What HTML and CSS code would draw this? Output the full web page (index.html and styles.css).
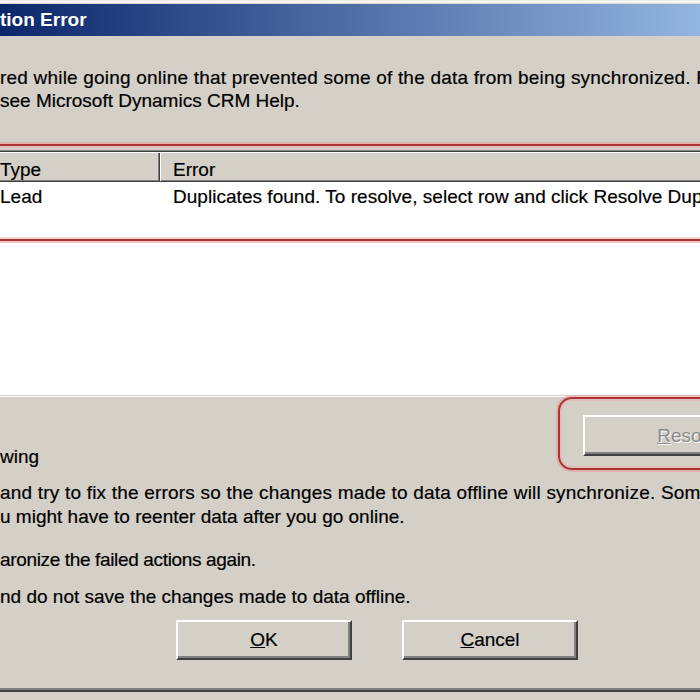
FILE: index.html
```html
<!DOCTYPE html>
<html lang="en">
<head>
<meta charset="utf-8">
<title>Synchronization Error</title>
<link rel="stylesheet" href="styles.css">
</head>
<body>
<div class="window">
  <div class="titlebar"><span class="title">tion Error</span></div>
  <div class="content">
    <p class="intro"><span class="wide">red while going online that prevented some of the data from being synchronized. For more information,</span><br>see Microsoft Dynamics CRM Help.</p>
    <div class="listwrap">
      <div class="mark mark-list"></div>
      <div class="list">
        <div class="list-head">
          <div class="hcell col1">Type</div>
          <div class="hcell col2">Error</div>
        </div>
        <div class="list-row">
          <div class="cell col1">Lead</div>
          <div class="cell col2">Duplicates found. To resolve, select row and click Resolve Duplicates.</div>
        </div>
      </div>
    </div>
    <div class="action-row">
      <div class="label">wing</div>
      <div class="resolve-wrap">
        <div class="mark mark-btn"></div>
        <button class="btn btn-resolve" disabled><u>R</u>esolve Duplicates</button>
      </div>
    </div>
    <p class="opt opt1"><span class="wide">and try to fix the errors so the changes made to data offline will synchronize. Some</span><br>u might have to reenter data after you go online.</p>
    <p class="opt opt2">aronize the failed actions again.</p>
    <p class="opt opt3">nd do not save the changes made to data offline.</p>
    <div class="buttons">
      <button class="btn btn-main"><u>O</u>K</button>
      <button class="btn btn-main"><u>C</u>ancel</button>
    </div>
  </div>
</div>
</body>
</html>
```

FILE: styles.css
```css
html, body {
  margin: 0;
  padding: 0;
}
body {
  width: 700px;
  height: 700px;
  overflow: hidden;
  background: #d4d0c8;
  font-family: "Liberation Sans", Arial, sans-serif;
  font-size: 19px;
  color: #000;
}
.window {
  width: 820px;
  margin-left: -10px;
  padding-top: 4px;
  background: linear-gradient(to bottom, #e6e4de 0, #ffffff 2px, #d4d0c8 4px) top / 100% 4px no-repeat, #d4d0c8;
  border-bottom: 2px solid #808080;
  box-shadow: 0 2px 0 #404040;
}
.titlebar {
  height: 32px;
  line-height: 32px;
  padding-left: 10px;
  background: linear-gradient(to right, #0a246a 0, #a6caf0 810px);
  color: #fff;
  font-weight: bold;
  font-size: 19px;
  white-space: nowrap;
}
.content {
  padding: 30px 0 28px 10px;
  -webkit-text-stroke: 0.2px #000;
}
.wide {
  letter-spacing: 0.2px;
}
.intro {
  margin: 0 0 38px;
  line-height: 23px;
  white-space: nowrap;
}
.listwrap {
  position: relative;
  margin-left: -8px;
}
.list {
  box-sizing: border-box;
  height: 247px;
  background: #fff;
  border: 1px solid;
  border-color: #808080 #ffffff #ffffff #808080;
  padding: 1px;
  box-shadow: inset 1px 1px #404040, inset -1px -1px #d4d0c8;
  white-space: nowrap;
  overflow: hidden;
}
.list-head {
  display: flex;
  background: #d4d0c8;
  border-top: 1px solid #fff;
  border-bottom: 1px solid #404040;
  box-shadow: inset 0 -1px #808080;
}
.hcell {
  box-sizing: border-box;
  height: 28px;
  padding-top: 7px;
  line-height: 20px;
}
.list-head .col1 {
  width: 166px;
  padding-left: 6px;
  border-right: 1px solid #404040;
  box-shadow: inset -1px 0 #808080;
}
.list-head .col2 {
  flex: 1;
  padding-left: 12px;
  border-left: 1px solid #fff;
}
.list-row {
  display: flex;
  padding-top: 3px;
  line-height: 23px;
}
.list-row .col1 {
  width: 166px;
  box-sizing: border-box;
  padding-left: 6px;
}
.list-row .col2 {
  padding-left: 13px;
  letter-spacing: 0.03px;
}
.mark {
  position: absolute;
  box-sizing: border-box;
  border: 2px solid #a83434;
  box-shadow: 0 0 0 2px rgba(236, 150, 150, 0.55), inset 0 0 0 2px rgba(240, 170, 170, 0.5);
  pointer-events: none;
  z-index: 2;
}
.mark-list {
  left: -30px;
  right: -30px;
  top: -6px;
  height: 97px;
  border-radius: 12px;
}
.action-row {
  display: grid;
  grid-template-columns: 583px 320px;
  align-items: start;
}
.label {
  margin-top: 48px;
  line-height: 23px;
}
.resolve-wrap {
  position: relative;
  margin-top: 18px;
}
.mark-btn {
  left: -25px;
  top: -18px;
  width: 360px;
  height: 73px;
  border-radius: 14px;
}
.btn {
  box-sizing: border-box;
  height: 41px;
  padding: 0;
  background: #d4d0c8;
  border: 2px solid;
  border-color: #ffffff #404040 #404040 #ffffff;
  box-shadow: inset -2px -2px #808080;
  font-family: "Liberation Sans", Arial, sans-serif;
  font-size: 19px;
  color: #000;
  text-align: center;
}
.btn-resolve {
  width: 311px;
  color: #8a8a8a;
  -webkit-text-stroke: 0;
  text-shadow: 1px 1px 0 #fff;
  white-space: nowrap;
}
.opt {
  margin: 0;
  line-height: 24px;
  white-space: nowrap;
}
.opt1 { margin-top: 13px; }
.opt2 { margin-top: 19px; letter-spacing: -0.35px; }
.opt3 { margin-top: 13px; }
.buttons {
  display: flex;
  gap: 50px;
  padding-left: 176px;
  margin-top: 11px;
}
.btn-main {
  width: 176px;
  height: 40px;
}
```
